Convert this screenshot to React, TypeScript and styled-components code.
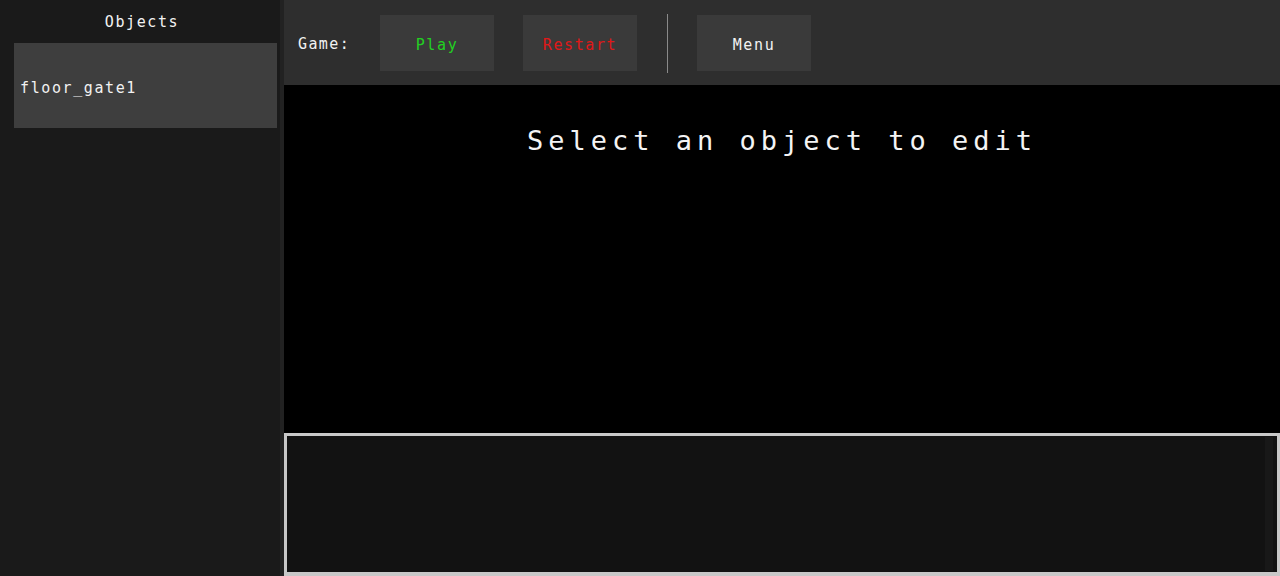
import React from 'react';
import styled, { createGlobalStyle } from 'styled-components';

const GlobalStyle = createGlobalStyle`
  html, body {
    margin: 0;
    padding: 0;
    background: #000;
    overflow: hidden;
  }
  #root {
    height: 576px;
  }
`;

const pixelFont = `'DejaVu Sans Mono', 'Liberation Mono', monospace`;

const Layout = styled.div`
  display: flex;
  width: 1280px;
  height: 576px;
  font-family: ${pixelFont};
  color: #f2f2f2;
`;

const Sidebar = styled.aside`
  flex-shrink: 0;
  background: #1a1a1a;
  border-right: 4px solid #222222;
  padding: 12px 3px 0 14px;
  box-sizing: content-box;
  display: flex;
  flex-direction: column;
  width: 263px;
`;

const SidebarTitle = styled.div`
  font-size: 15px;
  letter-spacing: 1.6px;
  text-align: center;
  height: 31px;
  line-height: 18px;
  padding-top: 1px;
  box-sizing: border-box;
  margin: 0 -7px 0 -14px;
`;

const ObjectItem = styled.div`
  height: 85px;
  background: #3e3e3e;
  display: flex;
  align-items: center;
  padding-left: 6px;
  padding-top: 4px;
  box-sizing: border-box;
  font-size: 15px;
  letter-spacing: 1.6px;
`;

const Workspace = styled.main`
  flex: 1;
  display: flex;
  flex-direction: column;
  min-width: 0;
`;

const Toolbar = styled.div`
  height: 85px;
  box-sizing: border-box;
  flex-shrink: 0;
  background: #2e2e2e;
  display: flex;
  align-items: center;
  gap: 29px;
  padding: 1px 14px 0;
`;

const ToolLabel = styled.span`
  font-size: 15px;
  letter-spacing: 1.4px;
  width: 52px;
  margin-right: 1px;
  padding-top: 2px;
`;

const ToolButton = styled.button<{ $tone?: string }>`
  width: 114px;
  height: 56px;
  border: none;
  background: #3a3a3a;
  color: ${(p) => p.$tone || '#f2f2f2'};
  font-family: ${pixelFont};
  font-size: 15px;
  letter-spacing: 1.6px;
  padding: 3px 0 0;
  cursor: pointer;
`;

const Separator = styled.div`
  width: 1px;
  height: 59px;
  background: #8a8a8a;
  margin-left: 1px;
`;

const Viewport = styled.div`
  flex: 1;
  background: #000;
  display: flex;
  justify-content: center;
  padding-top: 38px;
`;

const Heading = styled.h1`
  margin: 0;
  font-weight: normal;
  font-size: 27px;
  letter-spacing: 5px;
  line-height: 36px;
  height: 36px;
  color: #f4f4f4;
`;

const Console = styled.div`
  height: 143px;
  flex-shrink: 0;
  box-sizing: border-box;
  border: 3px solid #c8c8c8;
  border-bottom-width: 4px;
  background: #121212;
  display: flex;
  justify-content: flex-end;
  padding: 1px 4px 1px 0;
`;

const ConsoleTrack = styled.div`
  width: 8px;
  background: #181818;
`;

export default function App() {
  return (
    <>
      <GlobalStyle />
      <Layout>
        <Sidebar>
          <SidebarTitle>Objects</SidebarTitle>
          <ObjectItem>floor_gate1</ObjectItem>
        </Sidebar>
        <Workspace>
          <Toolbar>
            <ToolLabel>Game:</ToolLabel>
            <ToolButton $tone="#22d022">Play</ToolButton>
            <ToolButton $tone="#e01818">Restart</ToolButton>
            <Separator />
            <ToolButton>Menu</ToolButton>
          </Toolbar>
          <Viewport>
            <Heading>Select an object to edit</Heading>
          </Viewport>
          <Console>
            <ConsoleTrack />
          </Console>
        </Workspace>
      </Layout>
    </>
  );
}
